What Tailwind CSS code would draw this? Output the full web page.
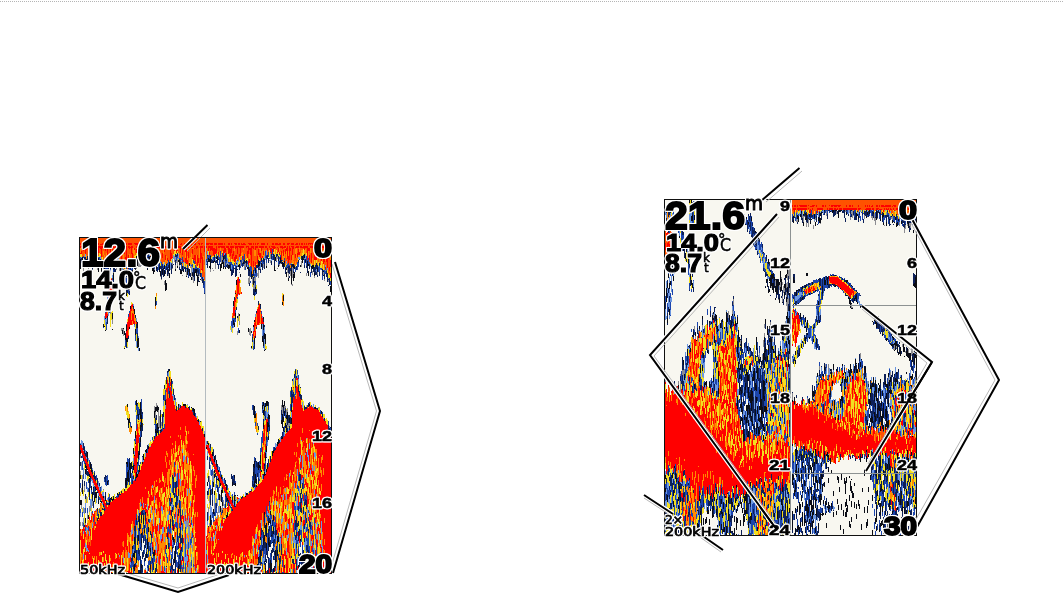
<!DOCTYPE html>
<html lang="en">
<head>
<meta charset="utf-8">
<title>Echo sounder displays</title>
<script src="https://cdn.jsdelivr.net/npm/@tailwindcss/browser@4"></script>
</head>
<body class="bg-white">

<main class="w-[1063px] h-[594px] overflow-hidden bg-white">
  <div class="h-[2px] border-b border-dotted border-[#b5b5b5]"></div>

  <div class="flex items-start pl-[79px]">

    <!-- dual frequency -->
    <figure class="relative w-[253px] h-[337px] mt-[235px]">
      <canvas id="dual" width="253" height="337" class="block"></canvas>
      <svg class="absolute inset-0 overflow-visible" width="253" height="337" viewBox="79 237 253 337" font-family="'Liberation Sans', Arial, sans-serif" font-weight="700">
        <path d="M205.500 238V573" stroke="#b4bcc0"/>
        <g fill="none" stroke-linejoin="miter">
          <path d="M207.500 225L183 249M335 262L380 411L333 573M118 574L178 592L229 575" stroke="#fff" stroke-width="4.500"/>
          <path d="M210 228L187 251M332 264L376.500 411L330 571M120 571L178 588L226 572" stroke="#b8b8b8"/>
          <path d="M207.500 225L183 249M335 262L380 411L333 573M118 574L178 592L229 575" stroke="#000" stroke-width="2"/>
        </g>
        <rect x="79.500" y="237.500" width="252" height="336" fill="none" stroke="#111"/>
        <g class="[filter:drop-shadow(1px_0_0_#fff)_drop-shadow(-1px_0_0_#fff)_drop-shadow(0_1px_0_#fff)_drop-shadow(0_-1px_0_#fff)]" fill="#000" stroke="#000" stroke-width="1.800">
          <text x="81" y="266" font-size="39" textLength="79" lengthAdjust="spacingAndGlyphs">12.6</text>
          <text x="81" y="288" font-size="24" stroke-width="1.200" textLength="53" lengthAdjust="spacingAndGlyphs">14.0</text>
          <text x="80" y="309.500" font-size="26" stroke-width="1.200" textLength="37" lengthAdjust="spacingAndGlyphs">8.7</text>
          <text x="314" y="257" font-size="26" textLength="18" lengthAdjust="spacingAndGlyphs">0</text>
          <text x="299" y="572.500" font-size="25" textLength="33" lengthAdjust="spacingAndGlyphs">20</text>
        </g>
        <g class="[filter:drop-shadow(1px_0_0_#fff)_drop-shadow(-1px_0_0_#fff)_drop-shadow(0_1px_0_#fff)_drop-shadow(0_-1px_0_#fff)]" fill="#000" stroke="#000" stroke-width=".5" font-size="14">
          <text x="322" y="306" textLength="10" lengthAdjust="spacingAndGlyphs">4</text>
          <text x="322" y="374" textLength="10" lengthAdjust="spacingAndGlyphs">8</text>
          <text x="312" y="441" textLength="20" lengthAdjust="spacingAndGlyphs">12</text>
          <text x="312" y="508" textLength="20" lengthAdjust="spacingAndGlyphs">16</text>
        </g>
        <g class="[filter:drop-shadow(1px_0_0_#fff)_drop-shadow(-1px_0_0_#fff)_drop-shadow(0_1px_0_#fff)_drop-shadow(0_-1px_0_#fff)]" fill="#000" stroke="#000" stroke-width=".5" font-family="'DejaVu Sans', sans-serif" font-weight="400">
          <text x="160" y="247.500" font-size="20" stroke-width="1" textLength="18" lengthAdjust="spacingAndGlyphs">m</text>
          <text x="133" y="283" font-size="15">°</text>
          <text x="135" y="289" font-size="17" textLength="11" lengthAdjust="spacingAndGlyphs">C</text>
          <text x="118" y="300" font-size="12">k</text>
          <text x="119" y="310" font-size="12">t</text>
          <text x="80" y="573.500" font-size="12" stroke-width=".7" textLength="45" lengthAdjust="spacingAndGlyphs">50kHz</text>
          <text x="207" y="573.500" font-size="12" stroke-width=".7" textLength="54" lengthAdjust="spacingAndGlyphs">200kHz</text>
        </g>
      </svg>
    </figure>

    <!-- split zoom -->
    <figure class="relative w-[253px] h-[337px] mt-[197px] ml-[332px]">
      <canvas id="zoom" width="253" height="337" class="block"></canvas>
      <svg class="absolute inset-0 overflow-visible" width="253" height="337" viewBox="664 199 253 337" font-family="'Liberation Sans', Arial, sans-serif" font-weight="700">
        <path d="M790.500 200V535M792 305.500H916M792 473.500H916" stroke="#8d9292"/>
        <rect x="664.500" y="199.500" width="252" height="336" fill="none" stroke="#111"/>
        <g fill="none">
          <path d="M799.500 168L761 201M777 214L650 355L777 530M912 219L999 380L917 527M862 306L932 362L866 471M644 495L673 514M697 532L723 550" stroke="#fff" stroke-width="4.500"/>
          <path d="M802 171L766 202M779 217L654 356L776 524M911 223L995 380L915 521M862 309L927 363L868 464M644 498L670 515M697 535L721 552" stroke="#b8b8b8"/>
          <path d="M799.500 168L761 201M777 214L650 355L777 530M912 219L999 380L917 527M862 306L932 362L866 471M644 495L673 514M697 532L723 550" stroke="#000" stroke-width="2"/>
        </g>
        <g class="[filter:drop-shadow(1px_0_0_#fff)_drop-shadow(-1px_0_0_#fff)_drop-shadow(0_1px_0_#fff)_drop-shadow(0_-1px_0_#fff)]" fill="#000" stroke="#000" stroke-width="1.800">
          <text x="665" y="228.500" font-size="39" textLength="80" lengthAdjust="spacingAndGlyphs">21.6</text>
          <text x="666" y="250.500" font-size="24" stroke-width="1.200" textLength="53" lengthAdjust="spacingAndGlyphs">14.0</text>
          <text x="665" y="271.500" font-size="26" stroke-width="1.200" textLength="37" lengthAdjust="spacingAndGlyphs">8.7</text>
          <text x="899" y="219" font-size="26" textLength="18" lengthAdjust="spacingAndGlyphs">0</text>
          <text x="884" y="535" font-size="25" textLength="33" lengthAdjust="spacingAndGlyphs">30</text>
        </g>
        <g class="[filter:drop-shadow(1px_0_0_#fff)_drop-shadow(-1px_0_0_#fff)_drop-shadow(0_1px_0_#fff)_drop-shadow(0_-1px_0_#fff)]" fill="#000" stroke="#000" stroke-width=".5" font-size="14">
          <text x="780" y="211" textLength="10" lengthAdjust="spacingAndGlyphs">9</text>
          <text x="770" y="268" textLength="20" lengthAdjust="spacingAndGlyphs">12</text>
          <text x="770" y="335" textLength="20" lengthAdjust="spacingAndGlyphs">15</text>
          <text x="770" y="403" textLength="20" lengthAdjust="spacingAndGlyphs">18</text>
          <text x="769" y="470" textLength="21" lengthAdjust="spacingAndGlyphs">21</text>
          <text x="769" y="535" textLength="21" lengthAdjust="spacingAndGlyphs">24</text>
          <text x="907" y="268" textLength="10" lengthAdjust="spacingAndGlyphs">6</text>
          <text x="897" y="335" textLength="20" lengthAdjust="spacingAndGlyphs">12</text>
          <text x="897" y="403" textLength="20" lengthAdjust="spacingAndGlyphs">18</text>
          <text x="897" y="470" textLength="20" lengthAdjust="spacingAndGlyphs">24</text>
        </g>
        <!-- cursor lines stay above the depth scale -->
        <path d="M932 362L897 420M760 507L777 530" fill="none" stroke="#000" stroke-width="2"/>
        <g class="[filter:drop-shadow(1px_0_0_#fff)_drop-shadow(-1px_0_0_#fff)_drop-shadow(0_1px_0_#fff)_drop-shadow(0_-1px_0_#fff)]" fill="#000" stroke="#000" stroke-width=".5" font-family="'DejaVu Sans', sans-serif" font-weight="400">
          <text x="745" y="210" font-size="20" stroke-width="1" textLength="18" lengthAdjust="spacingAndGlyphs">m</text>
          <text x="718" y="245" font-size="15">°</text>
          <text x="720" y="251" font-size="17" textLength="11" lengthAdjust="spacingAndGlyphs">C</text>
          <text x="703" y="262" font-size="12">k</text>
          <text x="704" y="272" font-size="12">t</text>
          <text x="665" y="524" font-size="12" stroke-width=".7" textLength="18" lengthAdjust="spacingAndGlyphs">2×</text>
          <text x="665" y="535.500" font-size="12" stroke-width=".7" textLength="54" lengthAdjust="spacingAndGlyphs">200kHz</text>
        </g>
      </svg>
    </figure>
  </div>
</main>

<script>
  // echo strength colours, one letter each
  const COLORS = {
    W: '#f8f7f0', G: '#8d8d92', K: '#0b0d16', N: '#0d2058', B: '#1c45ad',
    L: '#6b96e0', Y: '#f2de20', O: '#ff8a00', D: '#ff5200', R: '#ff0000'
  }

  function hash(a, b) {
    let n = Math.imul(a | 0, 374761393) + Math.imul(b | 0, 668265263)
    n = Math.imul(n ^ (n >>> 13), 1274126177)
    return ((n ^ (n >>> 16)) >>> 0) / 4294967296
  }

  function sounder(id, ox, oy) {
    const ctx = document.getElementById(id).getContext('2d')
    ctx.fillStyle = COLORS.W
    ctx.fillRect(0, 0, 253, 337)
    let left = 0, right = 0, shift = 0, seed = 1

    function paint(pts, palette, jag, width, len) {
      const p = new Path2D()
      pts.forEach((q, i) => i ? p.lineTo(q[0], q[1]) : p.moveTo(q[0], q[1]))
      if (!width) p.closePath()
      ctx.lineWidth = width || 1
      seed += 17
      const xs = pts.map(q => q[0]), ys = pts.map(q => q[1]), pad = jag + (width || 0) + 1
      const x0 = Math.max(left - shift, Math.floor(Math.min(...xs) - pad)), x1 = Math.min(right - shift, Math.max(...xs) + pad)
      const y0 = Math.max(oy, Math.floor(Math.min(...ys) - pad)), y1 = Math.min(oy + 336, Math.max(...ys) + pad)
      for (let x = x0; x <= x1; x++) {
        const off = (hash(x + shift, seed) - 0.5) * 2 * jag
        const h = (len || 4) + hash(x, seed + 5) * 3
        for (let y = y0; y <= y1; y++) {
          const hit = width ? ctx.isPointInStroke(p, x + .5, y + .5 + off) : ctx.isPointInPath(p, x + .5, y + .5 + off)
          if (!hit) continue
          const c = Math.floor((y + hash(x, 9) * 20) / h)
          const k = palette[Math.floor(hash(x + shift * 3 + seed, c) * palette.length)]
          if (k === '.') continue
          ctx.fillStyle = COLORS[k]
          ctx.fillRect(x + shift - ox, y - oy, 1, 1)
        }
      }
    }
    return {
      fill: (pts, pal, jag = 0, len) => paint(pts, pal, jag, 0, len),
      line: (pts, w, pal, jag = 0, len) => paint(pts, pal, jag, w, len),
      half: (l, r, s = 0) => { left = l; right = r; shift = s }
    }
  }

  // surface clutter: edge is the lower contour of the band
  function surface(s, top, x0, x1, edge, depth) {
    const band = d => [[x0, top], [x1, top], ...edge.map(p => [p[0], p[1] + d]).reverse()]
    s.fill(band(depth), 'KKNG....', 8)
    s.fill(band(depth / 2), 'KNNBG.', 5)
    s.fill(band(-3), 'NNBBKL', 4)
    s.fill(band(-6), 'YOYBLY', 3)
    s.fill(band(-9), 'DRDDRO', 3)
    s.fill([[x0, top], [x1, top], [x1, top + 8], [x0, top + 8]], 'D')
    s.line([[x0, top + 6], [x1, top + 6]], 1, 'DR')
    s.line([[x0, top + 9], [x1, top + 9]], 1, 'RRD')
  }

  const dual = sounder('dual', 79, 237)
  for (const half of [[80, 205, 0], [206, 331, 127]]) {
    const s = dual
    s.half(...half)
    surface(s, 238, 79, 205, [[79, 263], [98, 262], [106, 272], [112, 269], [118, 264], [125, 280], [131, 270], [138, 262], [148, 260], [158, 270], [168, 272], [176, 260], [185, 272], [193, 271], [199, 276], [205, 290]], 4)
    s.line([[127, 278], [128, 297]], 4, 'KNBYG', 3)
    s.line([[156, 295], [156, 307]], 2.5, 'BYOK', 2)
    s.line([[165, 274], [166, 288]], 3, 'K.G', 3)

    // fish
    s.line([[112, 278], [109, 300], [105, 330]], 4, 'KNBYL', 3)
    s.line([[112, 281], [110, 292], [106, 318]], 2.5, 'RRRO')
    s.fill([[111, 275], [115, 295], [108, 293]], 'RRO', 1)
    s.line([[111, 313], [112, 332]], 3, 'G.K.BY', 3)
    s.line([[126, 348], [128, 325], [132, 307], [136, 325], [138, 350]], 3.5, 'KNBLYK', 2)
    s.line([[127, 338], [129, 320], [132, 308], [134, 320]], 2.5, 'RRRO')
    s.fill([[132, 305], [137, 324], [128, 325]], 'RRRO')
    s.line([[122, 328], [124, 335]], 3, 'K.G', 1)

    // noise over the slope
    s.fill([[80, 450], [95, 483], [112, 500], [132, 493], [125, 525], [80, 570]], 'KNBLWWWYGW', 5)
    s.fill([[80, 530], [105, 500], [125, 500], [140, 470], [130, 540], [80, 572]], 'OYRRDBO', 3)
    s.line([[80, 442], [90, 470], [108, 510]], 6, 'KNYBL', 2)
    s.line([[126, 405], [128, 415], [131, 433]], 3, 'OBKYN', 2)
    s.line([[138, 402], [140, 425], [137, 447], [134, 484]], 7, 'KNBLYBK', 3)
    s.line([[139, 420], [137, 447], [134, 485]], 3.5, 'RRROY', 2)
    s.line([[127, 490], [129, 464], [133, 470]], 5, 'KNBK', 3)
    s.line([[156, 404], [158, 442]], 5, 'KGNB.YK', 4)
    s.line([[161, 412], [162, 438]], 4, 'KG.NY', 4)
    s.line([[106, 475], [107, 485]], 4, 'NBK', 2)

    // sea bed
    const bed = [[79, 573], [79, 553], [98, 520], [113, 500], [127, 490], [137, 478], [149, 448], [157, 436], [165, 428], [166, 390], [169, 377], [172, 394], [176, 411], [183, 406], [192, 411], [200, 425], [206, 440], [206, 573]]
    s.line(bed.slice(2, -1), 5, 'KNBYLYN', 2)
    s.fill(bed, 'R', 1)
    s.line([[169, 377], [168, 398]], 4, 'YORNB', 2)
    s.line([[80, 445], [90, 472], [108, 511], [113, 520]], 2.5, 'R')
    s.fill([[79, 535], [96, 523], [90, 545], [80, 572]], 'YORRDLR', 4)
    s.fill([[95, 573], [118, 553], [132, 520], [145, 495], [165, 465], [172, 435], [185, 430], [196, 455], [200, 573]], 'RRRRRRO', 8)
    s.fill([[112, 573], [132, 530], [143, 503], [165, 475], [174, 448], [187, 440], [192, 480], [199, 573]], 'RRYOYORLDO', 9)
    s.fill([[130, 573], [134, 530], [142, 507], [150, 525], [158, 573]], 'NNBBLYKO', 9)
    s.fill([[138, 573], [142, 525], [146, 545], [149, 573]], 'WNKBWN', 6)
    s.fill([[164, 573], [168, 500], [175, 466], [182, 510], [188, 573]], 'NBNBLYRYO', 9)
    s.fill([[170, 573], [174, 530], [180, 573]], 'WNKBNW', 6)
    s.fill([[182, 573], [185, 505], [193, 530], [195, 573]], 'LYORGBY', 7)
    s.fill([[82, 573], [84, 553], [120, 556], [126, 573]], 'RRRRORY', 4)
    s.line([[203, 440], [203, 573]], 4, 'R')
  }

  const z = sounder('zoom', 664, 199)
  z.half(665, 790)
  z.fill([[665, 204], [674, 204], [674, 232], [665, 232]], 'YBONWL', 3)
  z.line([[692, 200], [692, 225]], 5, 'BYNLK', 2)
  z.line([[679, 225], [683, 245], [690, 265], [692, 290]], 5, 'NBLYKW', 3)
  z.fill([[665, 231], [672, 231], [672, 256], [665, 258]], 'RRD', 2)
  z.line([[674, 255], [670, 285], [666, 322]], 7, 'NBKLW', 4)
  z.line([[747, 217], [753, 233], [762, 255], [772, 281], [778, 291]], 7, 'NBNKB', 4)
  z.line([[749, 224], [762, 255], [770, 278]], 5, 'NBBL', 1)
  z.line([[759, 250], [765, 264], [770, 276]], 3.5, 'YLYB', 1)
  z.line([[770, 279], [790, 296]], 16, 'K.GNKK', 7)
  z.line([[788, 268], [788, 320]], 4, 'KN.G', 3)

  // weed and wreck
  z.fill([[680, 388], [683, 365], [691, 331], [700, 327], [717, 312], [724, 323], [733, 303], [741, 335], [746, 345], [756, 340], [762, 360], [764, 330], [772, 325], [779, 360], [784, 325], [789, 303], [791, 320], [791, 470], [665, 470], [665, 388]], 'KKNBN.GL', 12)
  z.fill([[683, 390], [690, 345], [717, 323], [726, 330], [735, 316], [743, 355], [756, 350], [764, 370], [769, 345], [780, 362], [788, 330], [791, 460], [665, 440]], 'NBBLYKYL', 8)
  z.fill([[687, 378], [691, 342], [716, 323], [717, 337], [702, 347], [698, 386]], 'RROYDYO', 6)
  z.fill([[719, 402], [718, 353], [727, 338], [735, 330], [737, 390], [735, 435], [717, 430]], 'RROYDYR', 7)
  z.fill([[745, 358], [754, 358], [753, 368], [744, 368]], 'ROYYB', 3)
  z.fill([[766, 380], [788, 350], [790, 455], [767, 450]], 'ROYBNYLY', 10)
  z.fill([[737, 365], [765, 370], [768, 430], [742, 450]], 'NNBKWLBK', 9)
  z.fill([[665, 388], [682, 390], [702, 388], [737, 405], [744, 438], [790, 440], [790, 480], [735, 492], [680, 480], [665, 475]], 'RROYDYR', 7)
  z.fill([[706, 352], [713, 347], [713, 378], [710, 384], [704, 383]], 'W', 4)

  // bottom echo
  z.fill([[665, 468], [791, 470], [791, 536], [665, 536]], 'NBNYKBLY', 5)
  z.fill([[680, 485], [698, 480], [697, 536], [683, 536]], 'YRONBO', 6)
  z.fill([[755, 485], [774, 480], [773, 536], [758, 536]], 'YRONBO', 6)
  z.fill([[699, 536], [702, 515], [710, 502], [717, 520], [720, 536]], 'WWWWK', 6)
  z.fill([[731, 536], [734, 510], [742, 500], [747, 520], [749, 536]], 'WWWWK', 6)
  z.fill([[665, 397], [675, 398], [690, 406], [720, 436], [745, 462], [791, 457], [791, 482], [755, 483], [740, 490], [696, 493], [680, 473], [665, 465]], 'RRRRRO', 9, 7)
  z.fill([[665, 402], [690, 412], [715, 445], [743, 466], [790, 463], [790, 476], [730, 481], [685, 463], [665, 451]], 'R', 7)

  z.half(792, 915)
  surface(z, 200, 792, 916, [[792, 222], [803, 217], [814, 221], [824, 216], [830, 213], [838, 212], [848, 214], [855, 218], [865, 216], [881, 217], [892, 221], [905, 224], [916, 225]], 1)
  z.line([[794, 273], [794, 282]], 2, 'NK', 1)
  z.line([[807, 273], [807, 276]], 1.5, 'K')
  z.line([[915, 273], [914, 286]], 3, 'NK', 2)
  z.line([[823, 286], [819, 305], [818, 320], [809, 334], [800, 347], [792, 365]], 5, 'NBLYKB', 2)
  z.line([[792, 309], [803, 321], [811, 332], [818, 348]], 6, 'NBLYKB', 3)
  z.fill([[792, 310], [798, 314], [801, 332], [795, 344], [792, 342]], 'RRORY', 4)
  z.line([[792, 302], [804, 292], [818, 285], [833, 280], [843, 284], [857, 299]], 11, 'NKBNB', 1)
  z.line([[792, 302], [804, 292]], 4, 'LBYL', 1)
  z.line([[804, 292], [820, 285]], 7, 'YYOB', 1)
  z.line([[805, 292], [816, 287]], 4.5, 'RRO')
  z.line([[829, 280], [836, 280], [843, 285], [854, 296]], 8, 'YOR', .5)
  z.line([[830, 280], [836, 280], [843, 286], [852, 294]], 6, 'R')
  z.line([[849, 298], [852, 309]], 2, 'KG', 1)
  z.line([[855, 297], [862, 306]], 3, 'KBL', 2)
  z.line([[875, 319], [883, 329], [891, 339], [897, 347]], 8, 'NBBNK', 2)
  z.line([[884, 331], [894, 343]], 4, 'YLYB', 1)
  z.line([[894, 345], [906, 352], [916, 355]], 8, 'KNKGK.', 4)
  z.line([[912, 352], [913, 368]], 5, 'NKB.', 4)

  z.fill([[792, 400], [808, 403], [814, 390], [818, 370], [826, 366], [840, 370], [850, 368], [861, 359], [868, 377], [874, 384], [882, 387], [889, 372], [897, 366], [903, 382], [916, 373], [916, 440], [792, 440]], 'KKNBN.GL', 8)
  z.fill([[812, 402], [818, 380], [843, 370], [860, 367], [867, 384], [884, 392], [896, 378], [906, 385], [916, 378], [916, 440], [792, 435]], 'NBLYOLK', 5)
  z.fill([[813, 405], [819, 382], [842, 370], [844, 378], [830, 384], [829, 404]], 'RROYDO', 3)
  z.fill([[846, 387], [860, 371], [867, 395], [863, 436], [841, 430]], 'RROYDYR', 5)
  z.fill([[891, 395], [901, 382], [916, 390], [916, 435], [893, 433]], 'ROYBNYLY', 6)
  z.fill([[868, 388], [889, 389], [892, 425], [867, 430]], 'NNBKWLBK', 6)
  z.fill([[833, 384], [840, 380], [842, 395], [838, 400], [831, 397]], 'W', 3)
  z.fill([[792, 448], [916, 443], [916, 464], [880, 462], [845, 455], [822, 469], [792, 474]], 'NBBLYKN', 4)
  z.fill([[792, 462], [832, 459], [824, 490], [819, 536], [804, 536], [804, 490], [792, 490]], 'NBKWLBKW', 5)
  z.fill([[792, 485], [803, 490], [803, 536], [792, 536]], 'WWNWKBW', 4)
  z.fill([[825, 467], [837, 457], [848, 467], [860, 468], [868, 456], [875, 470], [877, 536], [820, 536]], 'WWWWWWWWWWWWWK', 4)
  z.line([[807, 522], [818, 512], [834, 506]], 7, 'NBNK.L', 2)
  z.line([[808, 488], [829, 505]], 5, 'NBK.W', 3)
  z.line([[850, 475], [848, 518]], 10, 'W.K.W.', 5)
  z.fill([[870, 464], [880, 448], [916, 448], [916, 521], [880, 515], [874, 498]], 'NBLYBNKYW', 5)
  z.fill([[872, 505], [916, 510], [916, 536], [874, 536]], 'WBNWWK', 5)
  z.line([[893, 455], [893, 510]], 6, 'YONRB', 5)
  z.line([[912, 460], [912, 500]], 6, 'YOYRNB', 5)
  z.fill([[792, 405], [812, 403], [837, 416], [858, 432], [889, 430], [916, 435], [916, 454], [885, 453], [852, 455], [834, 460], [812, 451], [792, 446]], 'RROYRRD', 5)
  z.fill([[792, 408], [814, 412], [832, 424], [856, 436], [916, 442], [916, 448], [850, 450], [817, 444], [792, 434]], 'R', 5)
</script>
</body>
</html>
